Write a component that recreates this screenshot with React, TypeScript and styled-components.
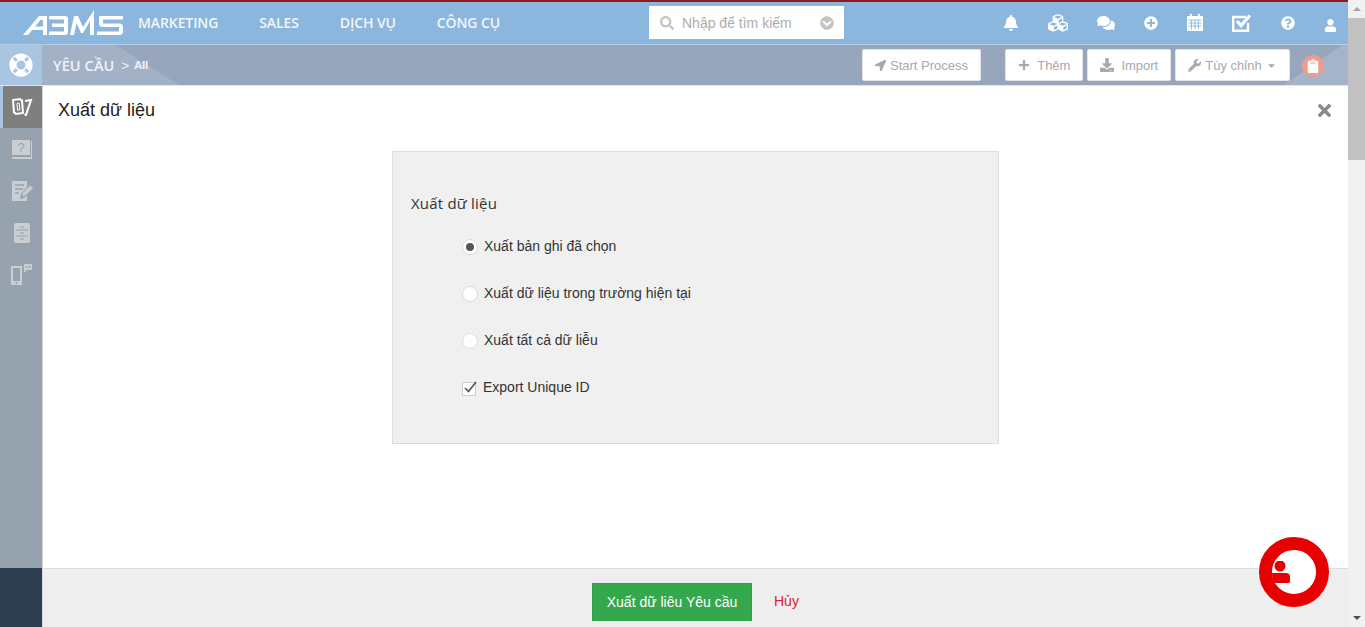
import React from "react";
import styled, { createGlobalStyle } from "styled-components";
import {
  FaBell,
  FaCaretDown,
  FaChevronCircleDown,
  FaClipboard,
  FaComments,
  FaCubes,
  FaDownload,
  FaLifeRing,
  FaLocationArrow,
  FaPlus,
  FaPlusCircle,
  FaQuestionCircle,
  FaSearch,
  FaTimes,
  FaUser,
  FaWrench,
} from "react-icons/fa";

const GlobalStyle = createGlobalStyle`
  html, body {
    margin: 0;
    padding: 0;
    height: 100%;
    overflow: hidden;
    background: #fff;
    font-family: "Liberation Sans", Arial, sans-serif;
  }
  * { box-sizing: border-box; }
`;

const Page = styled.div`
  position: relative;
  display: flex;
  width: 1365px;
  height: 627px;
  overflow: hidden;
`;

const Main = styled.div`
  flex: 1;
  display: flex;
  flex-direction: column;
  min-width: 0;
`;

const RedStripe = styled.div`
  height: 2px;
  background: #8c1c1f;
`;

const TopBar = styled.header`
  display: flex;
  align-items: center;
  height: 43px;
  padding: 0 0 1px 23px;
  background: #8bb7de;
  border-bottom: 1px solid #b5cfe8;
`;

const Logo = styled.svg`
  width: 100px;
  height: 26px;
  fill: #fff;
  flex: none;
`;

const Nav = styled.nav`
  display: flex;
  gap: 41px;
  margin-left: 15px;
  width: 511px;
`;

const NavLink = styled.a`
  font-family: "Open Sans", sans-serif;
  font-size: 14px;
  font-weight: 600;
  letter-spacing: -0.1px;
  color: #f1f6fb;
`;

const Search = styled.div`
  display: flex;
  align-items: center;
  width: 195px;
  height: 33px;
  padding: 0 10px 0 11px;
  background: #fff;
  color: #c4c4c4;
  font-size: 14px;
`;

const SearchText = styled.span`
  flex: 1;
  margin-left: 8px;
  color: #adadad;
`;

const TopIcons = styled.div`
  display: flex;
  align-items: center;
  gap: 29px;
  margin-left: 159px;
  color: #fff;
`;

const UserSlot = styled.span`
  display: flex;
  margin-top: 6px;
`;

const ToolBar = styled.div`
  display: flex;
  align-items: center;
  height: 41px;
  border-bottom: 1px solid #dfe5ec;
  background:
    linear-gradient(146deg, transparent 0, transparent 751px, #a6b4c9 751px),
    linear-gradient(32deg, #a3b1c7 0, #a3b1c7 95px, #98a6bd 95px);
`;

const RingCell = styled.div`
  display: flex;
  align-items: center;
  justify-content: center;
  width: 42px;
  height: 100%;
  background: #a9c5e2;
  color: #fff;
`;

const Crumb = styled.div`
  display: flex;
  align-items: center;
  margin-left: 11px;
  color: #f0f3f7;
  width: 809px;
`;

const CrumbTitle = styled.span`
  font-family: "Open Sans", sans-serif;
  font-size: 14.5px;
  font-weight: 600;
  letter-spacing: 0.1px;
`;

const CrumbSub = styled.span`
  margin-left: 5px;
  font-size: 11.5px;
  font-weight: bold;
  letter-spacing: -0.3px;
`;

const Sep = styled.span`
  margin-left: 7px;
  font-size: 13px;
`;

const ActionButton = styled.button<{ $w: number; $gap?: number }>`
  display: flex;
  align-items: center;
  justify-content: center;
  gap: 4px;
  width: ${(p) => p.$w}px;
  height: 32px;
  margin-left: ${(p) => p.$gap ?? 4}px;
  padding: 0;
  border: 1px solid #e4e4e4;
  border-radius: 2px;
  background: #fff;
  color: #a9a9a9;
  font-family: "Liberation Sans", sans-serif;
  font-size: 13px;
`;

const ClipBadge = styled.div`
  display: flex;
  align-items: center;
  justify-content: center;
  width: 22px;
  height: 22px;
  margin-left: 12px;
  margin-top: 2px;
  border-radius: 50%;
  background: #ee9c8e;
  color: #fff;
`;

const Body = styled.div`
  flex: 1;
  display: flex;
  min-height: 0;
`;

const Sidebar = styled.aside`
  display: flex;
  flex-direction: column;
  width: 42px;
  flex: none;
  background: #96a3ae;
`;

const SideItems = styled.div`
  flex: 1;
  display: flex;
  flex-direction: column;
`;

const SideItem = styled.div<{ $active?: boolean }>`
  display: flex;
  align-items: center;
  justify-content: center;
  height: 42px;
  padding-right: 2px;
  border-left: 3px solid ${(p) => (p.$active ? "#a9c5e2" : "transparent")};
  background: ${(p) => (p.$active ? "#7f7f7f" : "transparent")};
  background-clip: padding-box;
  color: ${(p) => (p.$active ? "#fff" : "#c9ced3")};
`;

const SideFoot = styled.div`
  height: 59px;
  background: #2c3e50;
`;

const Content = styled.div`
  flex: 1;
  display: flex;
  flex-direction: column;
  min-width: 0;
  border-left: 1px solid #d8d8d8;
`;

const Modal = styled.section`
  flex: 1;
  display: flex;
  flex-direction: column;
  background: #fff;
`;

const ModalHead = styled.div`
  display: flex;
  align-items: center;
  justify-content: space-between;
  height: 48px;
  padding: 0 14px 0 15px;
`;

const ModalTitle = styled.h3`
  margin: 0;
  font-size: 18px;
  font-weight: normal;
  color: #222;
`;

const CloseIcon = styled.span`
  display: flex;
  color: #8a8a8a;
`;

const ExportPanel = styled.div`
  width: 607px;
  height: 293px;
  margin: 17px 0 0 349px;
  padding: 41px 18px 0;
  background: #f0f0f0;
  border: 1px solid #ddd;
`;

const PanelTitle = styled.h4`
  margin: 0;
  font-family: "Open Sans", sans-serif;
  font-size: 15px;
  line-height: 20px;
  font-weight: 500;
  letter-spacing: 0.2px;
  color: #333;
`;

const Options = styled.div`
  display: flex;
  flex-direction: column;
  gap: 27px;
  margin: 23px 0 0 51px;
`;

const OptionRow = styled.label`
  display: flex;
  align-items: center;
  height: 20px;
  font-size: 14px;
  color: #333;
`;

const Radio = styled.span<{ $on?: boolean }>`
  display: flex;
  align-items: center;
  justify-content: center;
  width: 16px;
  height: 16px;
  margin-right: 6px;
  margin-top: 1px;
  border-radius: 50%;
  background: #fff;
  border: 1px solid #dcdcdc;
  &::after {
    content: "";
    display: ${(p) => (p.$on ? "block" : "none")};
    width: 8px;
    height: 8px;
    border-radius: 50%;
    background: #555;
  }
`;

const Check = styled.span`
  position: relative;
  width: 14px;
  height: 14px;
  margin-right: 7px;
  margin-top: 3px;
  background: #fff;
  border: 1px solid #ccc;
`;

const CheckMark = styled.svg`
  position: absolute;
  left: 0;
  top: -3px;
  width: 15px;
  height: 15px;
  fill: none;
  stroke: #555;
  stroke-width: 1.7;
`;

const Footer = styled.footer`
  display: flex;
  align-items: flex-start;
  height: 59px;
  padding: 14px 0 0 549px;
  background: #eee;
  border-top: 1px solid #ddd;
`;

const SaveButton = styled.button`
  width: 160px;
  height: 38px;
  padding: 0;
  border: 1px solid #2f9e46;
  background: #35a84d;
  color: #fff;
  font-family: "Liberation Sans", sans-serif;
  font-size: 14px;
`;

const CancelLink = styled.a`
  margin: 10px 0 0 22px;
  color: #d9232e;
  font-size: 14px;
`;

const ScrollTrack = styled.div`
  display: flex;
  flex-direction: column;
  width: 17px;
  flex: none;
  background: #f1f1f1;
`;

const ScrollArrow = styled.div<{ $down?: boolean }>`
  display: flex;
  align-items: center;
  justify-content: center;
  height: 18px;
  margin-top: ${(p) => (p.$down ? "auto" : 0)};
  &::after {
    content: "";
    border-left: 4px solid transparent;
    border-right: 4px solid transparent;
    ${(p) =>
      p.$down ? "border-top: 4px solid #505050;" : "border-bottom: 4px solid #a3a3a3;"}
  }
`;

const ScrollThumb = styled.div`
  height: 142px;
  background: #c1c1c1;
`;

const ChatBubble = styled.div`
  position: absolute;
  left: 1259px;
  top: 537px;
  width: 70px;
  height: 70px;
  border: 13px solid #e60000;
  border-radius: 50%;
  background: #fff;
`;

const ChatPerson = styled.svg`
  position: absolute;
  left: 0;
  top: 11px;
  width: 18px;
  height: 24px;
  fill: #e60000;
`;

const CalendarIcon = () => (
  <svg width="16" height="17" viewBox="0 0 16 17" fill="currentColor">
    <path d="M3 0 H5 V2 H11 V0 H13 V2 H16 V17 H0 V2 H3 Z" />
    <path d="M1.5 6 H14.5 M1.5 9 H14.5 M1.5 12 H14.5 M4.5 6 V15.5 M8 6 V15.5 M11.5 6 V15.5" stroke="#8bb7de" strokeWidth="0.9" />
  </svg>
);

const CheckSquareIcon = () => (
  <svg width="20" height="18" viewBox="0 0 20 18" fill="none" stroke="currentColor">
    <path d="M14 3 H1.2 V16.8 H16 V9" strokeWidth="2.4" />
    <path d="M5 7 L9 11.5 L18 1.5" strokeWidth="3.2" />
  </svg>
);

const TicketIcon = () => (
  <svg width="22" height="22" viewBox="0 0 22 22" fill="none" stroke="currentColor" strokeWidth="2">
    <path d="M2 4 L9 3 Q9.6 4.6 11 4.4 L12 17 L5 18 Q4.4 16.6 3 16.6 Z" />
    <path d="M6 7.5 L8.2 7.2 L8.8 13.8 L6.6 14.2 Z" strokeWidth="1" />
    <path d="M14 5 L20 4 L15 19 L13.4 18.4" />
  </svg>
);

const HelpBookIcon = () => (
  <svg width="22" height="22" viewBox="0 0 22 22" fill="currentColor">
    <path d="M1 2 H19 V17 H1 Z" />
    <path d="M20 3 H21 V21 H2 Q1 21 1 19 H20 Z" />
    <text x="10" y="14" textAnchor="middle" fontSize="13" fontFamily="Liberation Sans" fill="#96a3ae">?</text>
  </svg>
);

const EditIcon = () => (
  <svg width="22" height="22" viewBox="0 0 22 22" fill="currentColor">
    <path d="M1 1 H16 V7 L10 14 L9 19 L13 18 L16 15 V21 H1 Z" />
    <path d="M15 15 L11.5 16.5 L12 13 L19 5.5 L22 8 Z" />
    <path d="M4 5 H13 M4 9 H12 M4 13 H8" stroke="#96a3ae" strokeWidth="1.4" />
  </svg>
);

const CabinetIcon = () => (
  <svg width="18" height="22" viewBox="0 0 18 22" fill="currentColor">
    <path d="M3 1 H15 Q17 1 17 4 V19 Q17 21 15 21 H3 Q1 21 1 19 V4 Q1 1 3 1 Z" />
    <path d="M3 8 H15 M3 14 H15 M7 5 H11 M7 11 H11 M7 17 H11" stroke="#96a3ae" strokeWidth="1" />
  </svg>
);

const PhoneChatIcon = () => (
  <svg width="23" height="22" viewBox="0 0 23 22" fill="currentColor">
    <path fillRule="evenodd" d="M1 2 H12 V21 H1 Z M3 4 V17 H10 V4 Z" />
    <circle cx="6.5" cy="19" r="1" fill="#96a3ae" />
    <path d="M14 0 H22 V6 H17 L14 9 Z" />
    <circle cx="16.5" cy="3" r="1" fill="#96a3ae" />
    <circle cx="19.5" cy="3" r="1" fill="#96a3ae" />
  </svg>
);

export default function App() {
  return (
    <Page>
      <GlobalStyle />
      <Main>
        <RedStripe />
        <TopBar>
          <Logo viewBox="0 0 100 26">
            <path fillRule="evenodd" d="M0 25 L16 6 H24 V25 H20 V20 H9 L5 25Z M12 16.5 H20 V10 H17.5Z" />
            <path d="M26 6 H42 Q45 6 45 9 V22 Q45 25 42 25 H26 V21.5 H41 V17 H29 V13.5 H41 V9.5 H26Z" />
            <path d="M47 25 L51 6 H55 L60 17 L71 0 V25 H67 V11 L60 23 H58 L53.5 13 L51 25Z" />
            <path d="M76 6 H100 V9.5 H80 V13.5 H96 Q100 13.5 100 17 V21.5 Q100 25 96 25 H74 V21.5 H96 V17 H80 Q76 17 76 13.5Z" />
          </Logo>
          <Nav>
            <NavLink>MARKETING</NavLink>
            <NavLink>SALES</NavLink>
            <NavLink>DỊCH VỤ</NavLink>
            <NavLink>CÔNG CỤ</NavLink>
          </Nav>
          <Search>
            <FaSearch size={14} />
            <SearchText>Nhập để tìm kiếm</SearchText>
            <FaChevronCircleDown size={14} />
          </Search>
          <TopIcons>
            <FaBell size={16} />
            <FaCubes size={20} />
            <FaComments size={18} />
            <FaPlusCircle size={14} />
            <CalendarIcon />
            <CheckSquareIcon />
            <FaQuestionCircle size={14} />
            <UserSlot>
              <FaUser size={13} />
            </UserSlot>
          </TopIcons>
        </TopBar>
        <ToolBar>
          <RingCell>
            <FaLifeRing size={24} />
          </RingCell>
          <Crumb>
            <CrumbTitle>YÊU CẦU</CrumbTitle>
            <Sep>&gt;</Sep>
            <CrumbSub>All</CrumbSub>
          </Crumb>
          <ActionButton $w={119} $gap={0}>
            <FaLocationArrow size={11} />
            Start Process
          </ActionButton>
          <ActionButton $w={78} $gap={24}>
            <FaPlus size={12} />
            &nbsp;Thêm
          </ActionButton>
          <ActionButton $w={84}>
            <FaDownload size={14} />
            &nbsp;Import
          </ActionButton>
          <ActionButton $w={115}>
            <FaWrench size={13} />
            Tùy chỉnh
            <FaCaretDown size={11} />
          </ActionButton>
          <ClipBadge>
            <FaClipboard size={14} />
          </ClipBadge>
        </ToolBar>
        <Body>
          <Sidebar>
            <SideItems>
              <SideItem $active>
                <TicketIcon />
              </SideItem>
              <SideItem>
                <HelpBookIcon />
              </SideItem>
              <SideItem>
                <EditIcon />
              </SideItem>
              <SideItem>
                <CabinetIcon />
              </SideItem>
              <SideItem>
                <PhoneChatIcon />
              </SideItem>
            </SideItems>
            <SideFoot />
          </Sidebar>
          <Content>
            <Modal>
              <ModalHead>
                <ModalTitle>Xuất dữ liệu</ModalTitle>
                <CloseIcon>
                  <FaTimes size={19} />
                </CloseIcon>
              </ModalHead>
              <ExportPanel>
                <PanelTitle>Xuất dữ liệu</PanelTitle>
                <Options>
                  <OptionRow>
                    <Radio $on />
                    Xuất bản ghi đã chọn
                  </OptionRow>
                  <OptionRow>
                    <Radio />
                    Xuất dữ liệu trong trường hiện tại
                  </OptionRow>
                  <OptionRow>
                    <Radio />
                    Xuất tất cả dữ liễu
                  </OptionRow>
                  <OptionRow>
                    <Check>
                      <CheckMark viewBox="0 0 15 15">
                        <path d="M2 8 L5.5 11.5 L13 2" />
                      </CheckMark>
                    </Check>
                    Export Unique ID
                  </OptionRow>
                </Options>
              </ExportPanel>
            </Modal>
            <Footer>
              <SaveButton>Xuất dữ liêu Yêu cầu</SaveButton>
              <CancelLink>Hủy</CancelLink>
            </Footer>
          </Content>
        </Body>
      </Main>
      <ScrollTrack>
        <ScrollArrow />
        <ScrollThumb />
        <ScrollArrow $down />
      </ScrollTrack>
      <ChatBubble>
        <ChatPerson viewBox="0 0 18 24">
          <circle cx="8" cy="5" r="5.5" />
          <path d="M0 12 H14 Q18 12 18 16 V21 Q18 22 16 22 H3 Q0 18 0 12 Z" />
        </ChatPerson>
      </ChatBubble>
    </Page>
  );
}
